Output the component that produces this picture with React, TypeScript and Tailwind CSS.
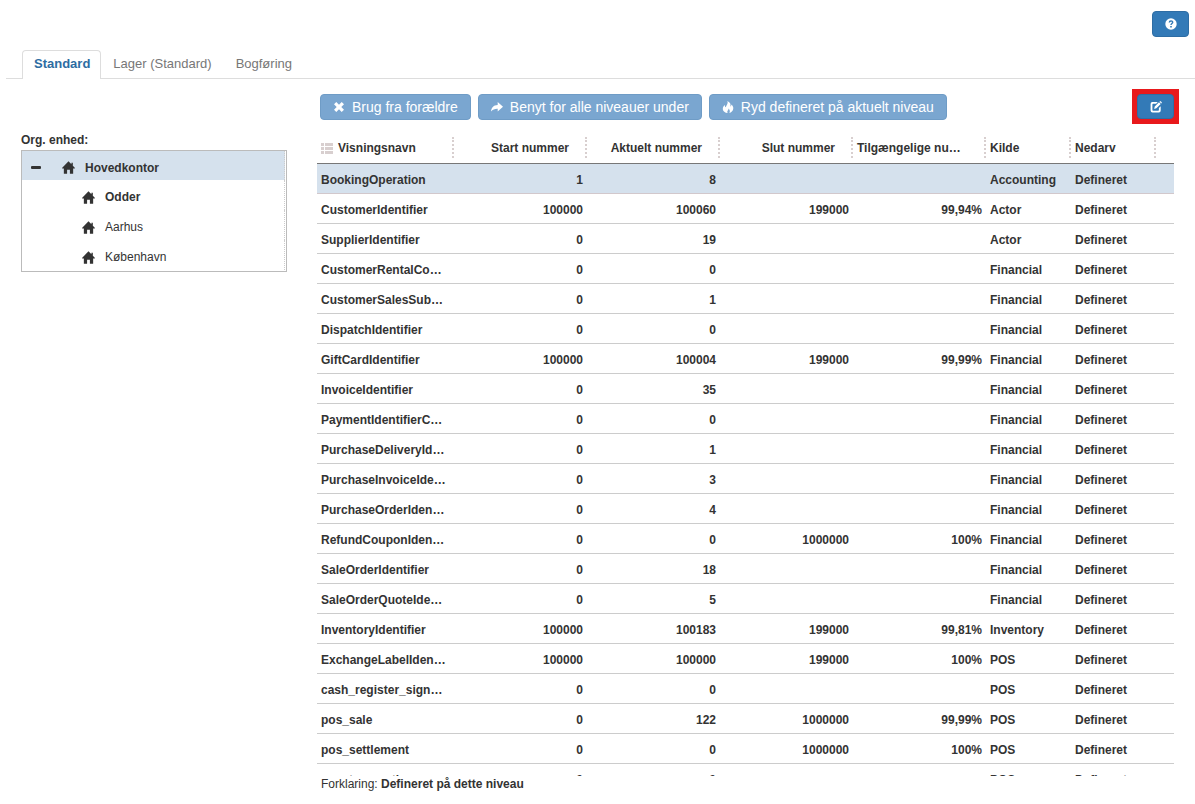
import type { ReactNode } from "react";

type IconProps = { className?: string };

function Icon({ className = "size-3", children }: IconProps & { children: ReactNode }) {
  return (
    <svg viewBox="0 0 12 12" fill="currentColor" aria-hidden="true" className={`shrink-0 ${className}`}>
      {children}
    </svg>
  );
}

const HomeIcon = () => (
  <Icon className="size-[13px]">
    <path d="M6 .3 8.700 3V1.500H10V4.300L12 6.400 11.700 7H10.300V11.800H7.300V8H4.700V11.800H1.700V7H.3L0 6.400Z" />
  </Icon>
);

const RemoveIcon = () => (
  <Icon>
    <path d="M3.300 1 6 3.700 8.700 1 11 3.300 8.300 6 11 8.700 8.700 11 6 8.300 3.300 11 1 8.700 3.700 6 1 3.300Z" />
  </Icon>
);

const ShareIcon = () => (
  <Icon>
    <path d="M6.700 1 12 5.800 6.700 10.600V7.700C4 7.600 1.700 8.400 0 10.500.3 6.600 2.600 4 6.700 3.900Z" />
  </Icon>
);

const FireIcon = () => (
  <Icon>
    <path d="M5.300 0C8.500 1.500 9 3.500 8.300 5.500 9 5.200 9.400 4.500 9.300 3.500 11 4.800 11.600 6.400 11.200 8 10.800 10 9.300 11.500 7.300 12 8.400 10.400 7.800 8.800 6.500 7.500 6.600 9 5.500 9.400 5.300 10.400 5.200 11 5.400 11.500 5.700 12 3 11.700 1 10.400.8 8.200.6 6.200 1.700 5 2.900 3.900 2.800 5 3.100 5.800 3.900 6.200 4.300 4 6.500 2.800 5.300 0Z" />
  </Icon>
);

const EditIcon = () => (
  <Icon>
    <path
      fillRule="evenodd"
      d="M2.300 1H7.800L6.100 2.800H3.100Q2.400 2.800 2.400 3.500V9Q2.400 9.700 3.100 9.700H8.200Q8.900 9.700 8.900 9V7L10.700 5.200V9.600Q10.700 11.500 8.800 11.500H2.500Q.6 11.500.6 9.600V2.900Q.6 1 2.300 1Z"
    />
    <path d="M9 1.300 10.700 3 6.400 7.300 4.200 7.900 4.700 5.600ZM9.500.8 10 .3Q10.400 0 10.800.3L11.700 1.200Q12 1.600 11.700 2L11.200 2.500Z" />
  </Icon>
);

const HelpIcon = () => (
  <Icon>
    <circle cx="6" cy="6" r="5.700" />
    <path
      d="M4.300 4.600C4.300 2.400 7.800 2.500 7.700 4.400 7.600 5.600 6 5.600 6 7"
      fill="none"
      stroke="#337ab7"
      strokeWidth="1.400"
    />
    <path fill="#337ab7" d="M5.200 8H6.800V9.500H5.200Z" />
  </Icon>
);

const ListIcon = () => (
  <Icon className="size-3 text-[#d8cfcf]">
    <path d="M0 1H3V4H0ZM4 1H12V4H4ZM0 5H3V8H0ZM4 5H12V8H4ZM0 9H3V12H0ZM4 9H12V12H4Z" />
  </Icon>
);

const actions = [
  { label: "Brug fra forældre", icon: <RemoveIcon /> },
  { label: "Benyt for alle niveauer under", icon: <ShareIcon /> },
  { label: "Ryd defineret på aktuelt niveau", icon: <FireIcon /> },
];

const columns = [
  { label: "Visningsnavn", numeric: false, headRight: false },
  { label: "Start nummer", numeric: true, headRight: true },
  { label: "Aktuelt nummer", numeric: true, headRight: true },
  { label: "Slut nummer", numeric: true, headRight: true },
  { label: "Tilgængelige nu…", numeric: true, headRight: false },
  { label: "Kilde", numeric: false, headRight: false },
  { label: "Nedarv", numeric: false, headRight: false },
];

const rows: string[][] = [
  ["BookingOperation", "1", "8", "", "", "Accounting"],
  ["CustomerIdentifier", "100000", "100060", "199000", "99,94%", "Actor"],
  ["SupplierIdentifier", "0", "19", "", "", "Actor"],
  ["CustomerRentalCo…", "0", "0", "", "", "Financial"],
  ["CustomerSalesSub…", "0", "1", "", "", "Financial"],
  ["DispatchIdentifier", "0", "0", "", "", "Financial"],
  ["GiftCardIdentifier", "100000", "100004", "199000", "99,99%", "Financial"],
  ["InvoiceIdentifier", "0", "35", "", "", "Financial"],
  ["PaymentIdentifierC…", "0", "0", "", "", "Financial"],
  ["PurchaseDeliveryId…", "0", "1", "", "", "Financial"],
  ["PurchaseInvoiceIde…", "0", "3", "", "", "Financial"],
  ["PurchaseOrderIden…", "0", "4", "", "", "Financial"],
  ["RefundCouponIden…", "0", "0", "1000000", "100%", "Financial"],
  ["SaleOrderIdentifier", "0", "18", "", "", "Financial"],
  ["SaleOrderQuoteIde…", "0", "5", "", "", "Financial"],
  ["InventoryIdentifier", "100000", "100183", "199000", "99,81%", "Inventory"],
  ["ExchangeLabelIden…", "100000", "100000", "199000", "100%", "POS"],
  ["cash_register_sign…", "0", "0", "", "", "POS"],
  ["pos_sale", "0", "122", "1000000", "99,99%", "POS"],
  ["pos_settlement", "0", "0", "1000000", "100%", "POS"],
  ["pos_transaction", "0", "0", "", "", "POS"],
];

const units = [
  { name: "Odder", bold: true },
  { name: "Aarhus", bold: false },
  { name: "København", bold: false },
];

function Tabs() {
  return (
    <nav className="ml-[6px] flex border-b border-[#ddd] pl-4 text-[13px] leading-[18px] text-[#777]">
      <a
        href="#standard"
        aria-current="page"
        className="-mb-px rounded-t border border-b-0 border-[#ddd] bg-white pt-1 pr-[10px] pb-[6px] pl-[11px] font-bold text-[#2d6ca2]"
      >
        Standard
      </a>
      <a href="#lager" className="px-3 pt-[5px] pb-1">
        Lager (Standard)
      </a>
      <a href="#bogforing" className="px-3 pt-[5px] pb-1">
        Bogføring
      </a>
    </nav>
  );
}

function OrgTree() {
  return (
    <aside className="w-[266px] shrink-0 pt-[38px]">
      <h2 id="org-label" className="mb-[2px] h-4 leading-4 font-bold">
        Org. enhed:
      </h2>
      <ul aria-labelledby="org-label" className="border border-[#bbb] pr-px">
        <li>
          <div className="flex h-[29px] items-center border-r border-dotted border-[#ccc] bg-[#d5e1ed] pt-1 pl-[9px] font-bold">
            <button type="button" aria-label="Fold sammen" className="mr-[21px] flex h-3 w-[10px] items-center">
              <span className="h-[3px] w-full rounded-[1px] bg-[#333]" />
            </button>
            <HomeIcon />
            <span className="ml-[10px]">Hovedkontor</span>
          </div>
          <ul className="pb-px">
            {units.map((u) => (
              <li
                key={u.name}
                className="flex h-[30px] items-center border-r border-dotted border-[#ccc] pt-1 pl-[60px]"
              >
                <HomeIcon />
                <span className={u.bold ? "ml-[10px] font-bold" : "ml-[10px]"}>{u.name}</span>
              </li>
            ))}
          </ul>
        </li>
      </ul>
    </aside>
  );
}

function NumberTable() {
  return (
    <table className="w-full table-fixed border-collapse font-bold">
      <colgroup>
        <col />
        <col className="w-[133px]" />
        <col className="w-[133px]" />
        <col className="w-[133px]" />
        <col className="w-[133px]" />
        <col className="w-[85px]" />
        <col className="w-[85px]" />
        <col className="w-[18px]" />
      </colgroup>
      <thead>
        <tr className="h-[34px] border-b border-[#777]">
          {columns.map((c, i) => (
            <th key={c.label} scope="col" className="p-0 pt-2 align-top font-bold">
              <div
                className={
                  c.headRight
                    ? "flex h-[21px] items-center justify-end border-r-2 border-dotted border-[#d8cfcf] pr-4 whitespace-nowrap"
                    : "flex h-[21px] items-center border-r-2 border-dotted border-[#d8cfcf] pl-1 whitespace-nowrap"
                }
              >
                {i === 0 && (
                  <span className="mr-[5px]">
                    <ListIcon />
                  </span>
                )}
                {c.label}
              </div>
            </th>
          ))}
          <td />
        </tr>
      </thead>
      <tbody>
        {rows.map((row, r) => (
          <tr
            key={row[0]}
            className={r === 0 ? "h-[30px] border-b border-[#d2c8cc] bg-[#d5e1ed]" : "h-[30px] border-b border-[#ccc]"}
          >
            {[...row, "Defineret"].map((value, i) => (
              <td
                key={columns[i].label}
                className={
                  columns[i].numeric
                    ? "px-1 pt-1 pb-0 text-right whitespace-nowrap"
                    : "pt-1 pr-0 pb-0 pl-1 text-left whitespace-nowrap"
                }
              >
                {value}
              </td>
            ))}
            <td />
          </tr>
        ))}
      </tbody>
    </table>
  );
}

export default function App() {
  return (
    <div className="flex h-screen flex-col overflow-hidden bg-white font-['Liberation_Sans',Arial,sans-serif] text-xs text-[#333]">
      <header className="flex justify-end pt-[11px] pr-[6px]">
        <button
          type="button"
          aria-label="Hjælp"
          className="flex h-[26px] w-[37px] items-center justify-center rounded border border-[#2e6da4] bg-[#337ab7] text-white"
        >
          <HelpIcon />
        </button>
      </header>
      <div className="mt-[13px]">
        <Tabs />
      </div>
      <div className="flex min-h-0 flex-1 gap-[30px] pt-[15px] pr-4 pl-[21px]">
        <OrgTree />
        <main className="flex min-w-0 flex-1 flex-col">
          <div className="flex items-start justify-between pl-[3px]">
            <div className="flex gap-[7px]">
              {actions.map((a) => (
                <button
                  key={a.label}
                  type="button"
                  disabled
                  className="flex h-[26px] items-center gap-[7px] rounded border border-[#6f9cc6] bg-[#7aa6d0] px-3 text-sm whitespace-nowrap text-white"
                >
                  {a.icon}
                  {a.label}
                </button>
              ))}
            </div>
            <div className="-mt-[5px] bg-[#e8191c] p-[5px]">
              <button
                type="button"
                aria-label="Rediger"
                className="flex h-[25px] w-[37px] items-center justify-center rounded-sm border border-[#2e6da4] bg-[#337ab7] text-white"
              >
                <EditIcon />
              </button>
            </div>
          </div>
          <div className="mt-[5px] mr-[5px] min-h-0 flex-1 overflow-hidden">
            <NumberTable />
          </div>
          <footer className="h-7 pl-1 leading-4">
            Forklaring: <strong>Defineret på dette niveau</strong>
          </footer>
        </main>
      </div>
    </div>
  );
}
